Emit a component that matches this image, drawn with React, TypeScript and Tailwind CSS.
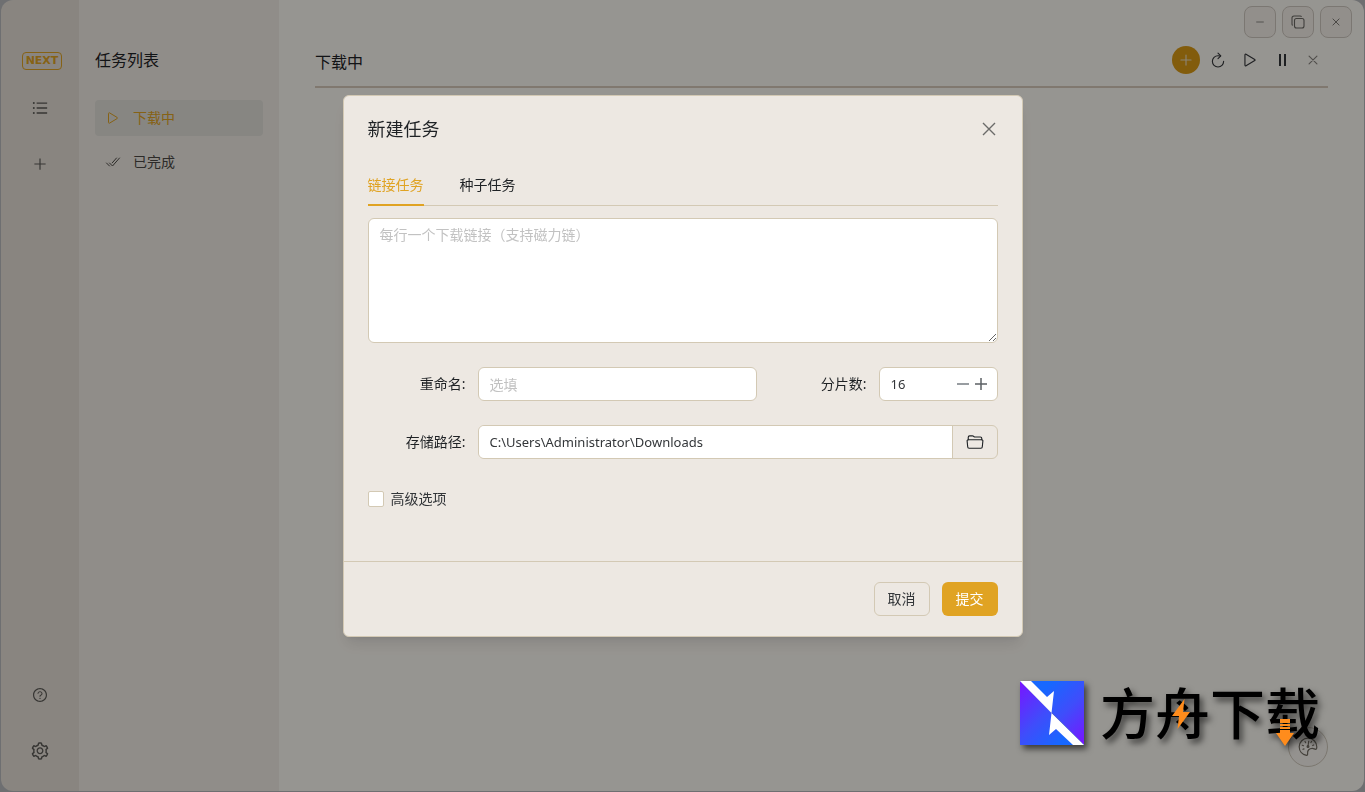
import { useState } from 'react';
import {
  AiOutlinePlus,
  AiOutlineQuestionCircle,
  AiOutlineSetting,
  AiOutlineUnorderedList,
} from 'react-icons/ai';
import {
  IoAddOutline,
  IoCheckmarkDoneOutline,
  IoCloseOutline,
  IoFolderOpenOutline,
  IoPlayOutline,
  IoRefreshOutline,
  IoRemoveOutline,
} from 'react-icons/io5';

const iconButton = 'flex size-8 items-center justify-center';
const windowButton =
  'flex size-8 items-center justify-center rounded-lg border border-[#cdc7be] bg-[#f3eee8] text-[#6b6964]';
const field =
  'rounded-md border border-[#d3c9b4] bg-white text-sm text-[#333639] placeholder:text-[#c2c2c2] outline-none';

function RestoreIcon() {
  return (
    <svg viewBox="0 0 14 14" className="size-3.5" fill="none" stroke="currentColor" strokeWidth="1.1">
      <rect x="3.5" y="3.5" width="9.5" height="9.5" rx="2" />
      <path d="M1.6 10.5A2 2 0 0 1 1 9V3a2 2 0 0 1 2-2h6a2 2 0 0 1 1.6.7" />
    </svg>
  );
}

function PauseIcon() {
  return (
    <svg viewBox="0 0 16 16" className="size-4" stroke="currentColor" strokeWidth="2">
      <path d="M6 2v12M11 2v12" />
    </svg>
  );
}

function PaletteIcon() {
  return (
    <svg viewBox="0 0 20 20" className="size-5" fill="none" stroke="currentColor" strokeWidth="1.2" strokeLinecap="round">
      <path d="M8.5 18.3C4 17.5 1.2 13.9 1.2 9.8 1.2 5 5 1.2 10 1.2s8.8 3.8 8.8 8.8c0 1.6-.5 2.3-1.3 2.3-1 0-1.700-1-3.300-1-2.800 0-5 2.200-4.600 5 .1 1.100-.1 2.200-1.100 2z" />
      <path d="M5 12.3l1-.4M4.3 8.3l1.2.4M7 4.5l.7 1.2M13.5 4.5l-.6 1M15.7 8l-1 .5M10.7 4.3L10 9.2" />
      <circle cx="10" cy="9.6" r="0.9" fill="currentColor" />
    </svg>
  );
}

function SideRail() {
  return (
    <nav className="flex w-[78px] shrink-0 flex-col items-center justify-between bg-[#e4ded6] pt-[52px] pb-6 text-[#5c5a56]">
      <div className="flex flex-col items-center gap-[22px]">
        <span className="ml-1 flex h-[18px] w-10 items-center justify-center rounded border border-[#e0a323] font-['DejaVu_Sans',sans-serif] text-[11px] font-bold text-[#e0a323]">
          NEXT
        </span>
        <div className="flex flex-col gap-6">
          <button aria-label="任务" className={iconButton}>
            <AiOutlineUnorderedList size={18} />
          </button>
          <button aria-label="新建" className={iconButton}>
            <AiOutlinePlus size={16} />
          </button>
        </div>
      </div>
      <div className="flex flex-col gap-6">
        <button aria-label="帮助" className={iconButton}>
          <AiOutlineQuestionCircle size={16} />
        </button>
        <button aria-label="设置" className={iconButton}>
          <AiOutlineSetting size={20} />
        </button>
      </div>
    </nav>
  );
}

function TaskPanel() {
  return (
    <aside className="w-[200px] shrink-0 bg-[#f1ece5] px-4 pt-12">
      <h2 className="text-base leading-6 text-[#1f2225]">任务列表</h2>
      <ul className="mt-7 flex flex-col gap-2 text-sm">
        <li>
          <button className="flex h-9 w-full items-center gap-3 rounded bg-[#e1dfd9] px-2.5 text-[#e0a323]">
            <IoPlayOutline size={16} />
            下载中
          </button>
        </li>
        <li>
          <button className="flex h-9 w-full items-center gap-3 rounded px-2.5 text-[#4b4945]">
            <IoCheckmarkDoneOutline size={16} />
            已完成
          </button>
        </li>
      </ul>
    </aside>
  );
}

function MainArea() {
  return (
    <main className="flex min-w-0 flex-1 flex-col bg-[#fbf8f2]">
      <div className="flex justify-end gap-1.5 pt-1.5 pr-3">
        <button aria-label="最小化" className={windowButton}>
          <IoRemoveOutline size={12} />
        </button>
        <button aria-label="还原" className={windowButton}>
          <RestoreIcon />
        </button>
        <button aria-label="关闭" className={windowButton}>
          <IoCloseOutline size={14} />
        </button>
      </div>
      <header className="mx-9 flex h-[50px] items-center justify-between border-b-2 border-[#d6c9ba]">
        <h1 className="text-base text-[#1f2225]">下载中</h1>
        <div className="mb-1 flex items-center text-[#333639]">
          <button
            aria-label="新建任务"
            className="mr-0.5 flex size-7 items-center justify-center rounded-full bg-[#d99a14] text-[#e8dcc4]"
          >
            <IoAddOutline size={18} />
          </button>
          <button aria-label="刷新" className={iconButton}>
            <IoRefreshOutline size={18} />
          </button>
          <button aria-label="开始" className={iconButton}>
            <IoPlayOutline size={18} />
          </button>
          <button aria-label="暂停" className={iconButton}>
            <PauseIcon />
          </button>
          <button aria-label="删除" className="flex h-8 w-[30px] items-center justify-center text-[#85827d]">
            <IoCloseOutline size={18} />
          </button>
        </div>
      </header>
    </main>
  );
}

function NewTaskDialog() {
  const [links, setLinks] = useState('');
  const [rename, setRename] = useState('');
  const [split, setSplit] = useState(16);
  const [dir, setDir] = useState('C:\\Users\\Administrator\\Downloads');

  return (
    <div className="fixed inset-0 flex items-start justify-center bg-black/40 pt-[95px]">
      <form
        role="dialog"
        aria-labelledby="dialog-title"
        onSubmit={(e) => e.preventDefault()}
        className="w-[680px] rounded-md border border-[#d3c9b4] bg-[#ede8e2] text-sm text-[#1f2225] shadow-lg"
      >
        <div className="px-6">
          <div className="flex h-[66px] items-center justify-between">
            <h2 id="dialog-title" className="text-lg">新建任务</h2>
            <button type="button" aria-label="关闭" className="flex size-[18px] items-center justify-center text-[#6b6b69]">
              <svg viewBox="0 0 14 14" className="size-3.5" stroke="currentColor" strokeWidth="1.4">
                <path d="M1 1l12 12M13 1L1 13" />
              </svg>
            </button>
          </div>

          <div role="tablist" className="flex h-11 gap-9 border-b border-[#d3c9b4]">
            <button type="button" role="tab" aria-selected="true" className="-mb-px border-b-2 border-[#e0a323] pt-1 text-[#e0a323]">
              链接任务
            </button>
            <button type="button" role="tab" aria-selected="false" className="-mb-px border-b-2 border-transparent pt-1">
              种子任务
            </button>
          </div>

          <textarea
            aria-label="下载链接"
            placeholder="每行一个下载链接（支持磁力链）"
            value={links}
            onChange={(e) => setLinks(e.target.value)}
            className={`mt-3 block h-[125px] w-full resize-y px-[11px] py-1.5 ${field}`}
          />

          <div className="mt-6 flex items-center">
            <label htmlFor="rename" className="mr-3 w-[98px] text-right">重命名:</label>
            <input
              id="rename"
              placeholder="选填"
              value={rename}
              onChange={(e) => setRename(e.target.value)}
              className={`h-[34px] min-w-0 flex-1 px-[11px] ${field}`}
            />
            <label htmlFor="split" className="mr-3 w-[110px] text-right">分片数:</label>
            <div className={`flex h-[34px] w-[119px] items-center pr-[7px] pl-[11px] ${field}`}>
              <input
                id="split"
                value={split}
                onChange={(e) => setSplit(Number(e.target.value) || 1)}
                className="w-0 min-w-0 flex-1 text-[13px] outline-none"
              />
              <button type="button" aria-label="减少" onClick={() => setSplit(Math.max(1, split - 1))} className="flex size-[18px] items-center justify-center">
                <svg viewBox="0 0 12 12" className="size-3" stroke="#767c82" strokeWidth="1.5">
                  <path d="M0 6h12" />
                </svg>
              </button>
              <button type="button" aria-label="增加" onClick={() => setSplit(split + 1)} className="flex size-[18px] items-center justify-center">
                <svg viewBox="0 0 12 12" className="size-3" stroke="#5c6064" strokeWidth="1.5">
                  <path d="M0 6h12M6 0v12" />
                </svg>
              </button>
            </div>
          </div>

          <div className="mt-6 flex items-center">
            <label htmlFor="dir" className="mr-3 w-[98px] text-right">存储路径:</label>
            <div className="flex h-[34px] min-w-0 flex-1 overflow-hidden rounded-md border border-[#d3c9b4]">
              <input
                id="dir"
                value={dir}
                onChange={(e) => setDir(e.target.value)}
                className="min-w-0 flex-1 bg-white px-[11px] text-[13px] text-[#333639] outline-none"
              />
              <button type="button" aria-label="选择目录" className="flex w-[45px] items-center justify-center border-l border-[#d3c9b4]">
                <IoFolderOpenOutline size={18} />
              </button>
            </div>
          </div>

          <label className="mt-[30px] flex h-5 w-fit items-center gap-[7px] text-[#333639]">
            <input type="checkbox" className="size-4 appearance-none rounded-xs border border-[#d3c9b4] bg-white" />
            高级选项
          </label>
        </div>

        <footer className="mt-[52px] flex justify-end gap-3 border-t border-[#d3c9b4] px-6 py-5">
          <button type="button" className="h-[34px] w-14 rounded-md border border-[#d3c9b4] text-[#333639]">
            取消
          </button>
          <button type="submit" className="h-[34px] w-14 rounded-md bg-[#e0a323] text-white">
            提交
          </button>
        </footer>
      </form>
    </div>
  );
}

function Brand() {
  return (
    <div className="pointer-events-none fixed right-[45px] bottom-[43px] flex items-center gap-4 drop-shadow-[3px_4px_3px_rgba(0,0,0,0.6)]">
      <svg viewBox="0 0 64 64" className="size-16">
        <defs>
          <linearGradient id="brand-upper" x1="0" y1="0" x2="1" y2="1">
            <stop offset="0.25" stopColor="#1768ff" />
            <stop offset="0.6" stopColor="#3f4dfb" />
            <stop offset="1" stopColor="#7a14ff" />
          </linearGradient>
          <linearGradient id="brand-lower" x1="0" y1="0" x2="1" y2="1">
            <stop offset="0" stopColor="#7a14ff" />
            <stop offset="0.45" stopColor="#3f4dfb" />
            <stop offset="0.8" stopColor="#1768ff" />
          </linearGradient>
        </defs>
        <path d="M0 0h64v64z" fill="url(#brand-upper)" />
        <path d="M0 0v64h64z" fill="url(#brand-lower)" />
        <path d="M0 0h11l16 16 7-6-2.5 22zM31.5 32L64 64H53L36 48l-7 6z" fill="#fff" />
      </svg>
      <div className="relative text-[55px] leading-[72px] font-medium text-black">
        方舟下载
        <svg viewBox="0 0 18 30" className="absolute top-[22px] left-[72px] h-[30px] w-[18px]">
          <path d="M12.5 0L0 17h7L5.5 30 18 13h-7z" fill="#ff8c1c" />
        </svg>
        <svg viewBox="0 0 18 27" className="absolute top-[42px] left-44 h-[27px] w-[18px]" fill="#ff8c1c">
          <path d="M4 0h10v4H4zM4 5h10v2H4zM4 8h10v2H4zM4 11h10v3h4L9 27 0 14h4z" />
        </svg>
      </div>
    </div>
  );
}

export default function App() {
  return (
    <div className="flex h-screen bg-[#b8babd] pr-px pb-px pl-px font-['Noto_Sans','Noto_Sans_CJK_SC',sans-serif]">
      <div className="flex min-w-0 flex-1 overflow-hidden rounded-xl">
        <SideRail />
        <TaskPanel />
        <MainArea />
      </div>
      <NewTaskDialog />
      <button
        aria-label="主题"
        className="fixed right-[37px] bottom-[25px] flex size-10 items-center justify-center rounded-full border border-[#7b776f] bg-[#94928f] text-[#45423c]"
      >
        <PaletteIcon />
      </button>
      <Brand />
    </div>
  );
}
